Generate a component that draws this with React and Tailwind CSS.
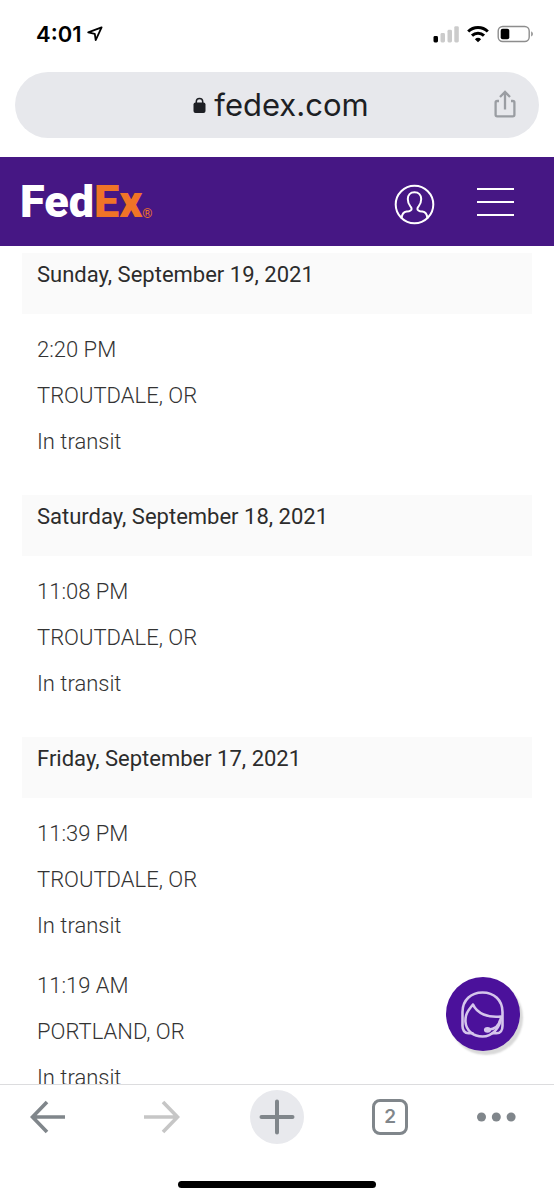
const days = [
  {
    date: "Sunday, September 19, 2021",
    events: [{ time: "2:20 PM", place: "TROUTDALE, OR", status: "In transit" }],
  },
  {
    date: "Saturday, September 18, 2021",
    events: [{ time: "11:08 PM", place: "TROUTDALE, OR", status: "In transit" }],
  },
  {
    date: "Friday, September 17, 2021",
    events: [
      { time: "11:39 PM", place: "TROUTDALE, OR", status: "In transit" },
      { time: "11:19 AM", place: "PORTLAND, OR", status: "In transit" },
    ],
  },
];

function StatusBar() {
  return (
    <div className="flex h-[72px] items-start justify-between pt-5 pr-5 pl-9">
      <div className="flex h-7 items-center gap-1.5 font-['Inter',sans-serif] text-[22px] leading-7 font-semibold text-black">
        <span>4:01</span>
        <svg width="16" height="16" viewBox="0 0 16 16" fill="none" stroke="currentColor" strokeWidth="1.8" strokeLinejoin="round" aria-hidden="true">
          <path d="M14.600 1.400 1.200 6.400l6.600 1.500.9 6.200z" />
        </svg>
      </div>
      <div className="flex h-7 items-center gap-2">
        <svg width="26" height="18" viewBox="0 0 26 18" aria-hidden="true">
          <rect x="0.500" y="11" width="4.500" height="6.500" rx="1.4" fill="#000" />
          <rect x="7.500" y="8" width="4.500" height="9.500" rx="1.4" fill="#cbcbcb" />
          <rect x="14.500" y="4.800" width="4.500" height="12.700" rx="1.4" fill="#cbcbcb" />
          <rect x="21.300" y="1.200" width="4.500" height="16.300" rx="1.4" fill="#cbcbcb" />
        </svg>
        <svg width="22" height="18" viewBox="0 0 22 18" fill="none" stroke="#000" strokeWidth="3" aria-hidden="true">
          <path d="M1.200 6.500a14 14 0 0 1 19.600 0" />
          <path d="M5 10.600a8.600 8.600 0 0 1 12 0" />
          <path d="M11 17.300 7.900 14.200a4.500 4.500 0 0 1 6.200 0z" fill="#000" stroke="none" />
        </svg>
        <svg width="37" height="18" viewBox="0 0 37 18" aria-hidden="true">
          <rect x="1.200" y="1.500" width="31" height="15" rx="4.500" fill="none" stroke="#8d8d8d" strokeWidth="1.400" />
          <rect x="3.700" y="3.700" width="8.600" height="10.600" rx="2" fill="#000" />
          <path d="M34.200 6.600c2.200.6 2.200 4.200 0 4.800z" fill="#8d8d8d" />
        </svg>
      </div>
    </div>
  );
}

function AddressBar() {
  return (
    <div className="mx-[15px] mb-[19px] flex h-[66px] items-center rounded-full bg-[#e7e8ec] pr-5 pl-14">
      <button type="button" className="flex flex-1 items-center justify-center gap-2 font-['Inter',sans-serif] text-[31px] leading-10 text-[#1d1f24]">
        <svg width="13" height="17" viewBox="0 0 13 17" aria-hidden="true">
          <path d="M3.300 6V4.600a3.200 3.200 0 0 1 6.400 0V6" fill="none" stroke="currentColor" strokeWidth="1.500" />
          <rect x="0.500" y="5.500" width="12" height="10.500" rx="2" fill="currentColor" />
        </svg>
        <span>fedex.com</span>
      </button>
      <button type="button" aria-label="Share" className="flex w-7 justify-center text-[#9a9da2]">
        <svg width="22" height="30" viewBox="0 0 22 30" fill="none" stroke="currentColor" strokeWidth="2.300" aria-hidden="true">
          <path d="M5 11H3.200a1.600 1.600 0 0 0-1.600 1.600v12.200a1.600 1.600 0 0 0 1.600 1.600h15.600a1.600 1.600 0 0 0 1.600-1.600V12.600A1.600 1.600 0 0 0 18.800 11H17" />
          <path d="M11 19.500V2.500M6 7l5-5 5 5" />
        </svg>
      </button>
    </div>
  );
}

function SiteHeader() {
  return (
    <header className="flex h-[89px] shrink-0 items-center justify-between bg-[#461784] pr-10 pl-5">
      <a href="#home" aria-label="FedEx" className="flex items-end font-['Roboto',sans-serif] text-white">
        <span className="text-[45px] leading-[48px] font-black">
          Fed<span className="text-[#f07427]">Ex</span>
        </span>
        <span className="pb-1 text-[13px] leading-4 text-[#f07427]">®</span>
      </a>
      <div className="flex items-center gap-[42px] pt-1.5 text-white">
        <button type="button" aria-label="Account">
          <svg width="41" height="41" viewBox="0 0 41 41" fill="none" stroke="currentColor" strokeWidth="2" aria-hidden="true">
            <circle cx="20.500" cy="20.500" r="18.800" />
            <path d="M7.600 34.300c.3-4 1.800-6.200 5-6.700 3.600-.5 5-.9 5-2.700 0-1-.4-1.600-1.200-2.500-1.700-2-2.600-4-2.600-7.400 0-4 2.500-6.700 6.700-6.700s6.700 2.700 6.700 6.700c0 3.400-.9 5.400-2.600 7.400-.8.900-1.200 1.500-1.200 2.500 0 1.800 1.400 2.200 5 2.700 3.200.5 4.700 2.700 5 6.700" />
          </svg>
        </button>
        <button type="button" aria-label="Menu" className="flex w-[37px] flex-col gap-[11px] pb-1.5">
          <span className="h-0.5 w-full bg-white" />
          <span className="h-0.5 w-full bg-white" />
          <span className="h-0.5 w-full bg-white" />
        </button>
      </div>
    </header>
  );
}

function Day({ date, events }) {
  return (
    <section>
      <h2 className="h-[61px] bg-[#fafafa] px-[15px] text-[22px] leading-[44px] font-normal text-[#2c2c2c]">{date}</h2>
      <ul className="flex flex-col gap-3.5 px-[15px] pt-[13px] pb-[30px] text-[22px] leading-[46px] font-light text-[#333]">
        {events.map((e) => (
          <li key={e.time}>
            <p>{e.time}</p>
            <p>{e.place}</p>
            <p>{e.status}</p>
          </li>
        ))}
      </ul>
    </section>
  );
}

function ChatButton() {
  return (
    <button type="button" aria-label="Chat with support" className="absolute right-[34px] bottom-[33px] flex size-[74px] items-center justify-center rounded-full bg-[#4b119b] shadow-[3px_4px_2px_#d9d9d9]">
      <svg width="46" height="50" viewBox="0 0 46 50" fill="none" stroke="#d5c5ec" strokeWidth="2.600" strokeLinecap="round" strokeLinejoin="round" aria-hidden="true">
        <path d="M12.500 44.300H8.500C4.500 44.300 2.500 41 2.500 37V23C2.500 11 11 3.500 22.500 3.500S42.500 11 42.500 23v14c0 4-2 7.300-6 7.300h-4" />
        <path d="M13 15.500C7.500 22 5 26 5.500 33c.6 8.500 8 14.500 17 14.500C32 47.500 40.500 39 41 27.500c-13 1.500-24-3-28-12z" />
        <path d="M40 31.500c-1 5-4.500 8.500-11.500 9.300" />
        <ellipse cx="27.500" cy="40.800" rx="2.300" ry="1.600" fill="#d5c5ec" />
      </svg>
    </button>
  );
}

function Toolbar() {
  return (
    <footer className="flex h-[116px] shrink-0 flex-col items-center justify-between border-t border-[#dcdcde] bg-white pt-[5px] pb-3">
      <nav aria-label="Browser" className="flex w-full items-center justify-between pr-[38px] pl-[30px] text-[#80868b]">
        <button type="button" aria-label="Back">
          <svg width="37" height="34" viewBox="0 0 37 34" fill="none" stroke="currentColor" strokeWidth="3.600" aria-hidden="true">
            <path d="M35 17H3M17 2 2.500 17 17 32" />
          </svg>
        </button>
        <button type="button" aria-label="Forward" className="pl-2 text-[#c6c6c6]">
          <svg width="37" height="34" viewBox="0 0 37 34" fill="none" stroke="currentColor" strokeWidth="3.600" aria-hidden="true">
            <path d="M0 17h33M19 2l14.500 15L19 32" />
          </svg>
        </button>
        <button type="button" aria-label="New tab" className="flex size-[54px] items-center justify-center rounded-full bg-[#e8e9ed]">
          <svg width="36" height="36" viewBox="0 0 36 36" fill="none" stroke="currentColor" strokeWidth="4" strokeLinecap="round" aria-hidden="true">
            <path d="M18 2.500v31M2.500 18h31" />
          </svg>
        </button>
        <button type="button" aria-label="2 open tabs" className="flex size-9 items-center justify-center rounded-lg border-[3px] border-[#80868b] font-['Inter',sans-serif] text-[19px] leading-6 font-semibold">
          2
        </button>
        <button type="button" aria-label="More">
          <svg width="39" height="10" viewBox="0 0 39 10" fill="currentColor" aria-hidden="true">
            <circle cx="4.500" cy="5" r="4.500" />
            <circle cx="19.300" cy="5" r="4.500" />
            <circle cx="34.100" cy="5" r="4.500" />
          </svg>
        </button>
      </nav>
      <div className="h-[7px] w-[198px] rounded-full bg-black" />
    </footer>
  );
}

export default function App() {
  return (
    <div className="flex h-screen flex-col bg-white">
      <div className="shrink-0">
        <StatusBar />
        <AddressBar />
      </div>
      <SiteHeader />
      <div className="relative flex min-h-0 flex-1 flex-col">
        <main className="min-h-0 flex-1 overflow-hidden px-[22px] pt-[7px] font-['Roboto',sans-serif]">
          {days.map((d) => (
            <Day key={d.date} {...d} />
          ))}
        </main>
        <ChatButton />
      </div>
      <Toolbar />
    </div>
  );
}
